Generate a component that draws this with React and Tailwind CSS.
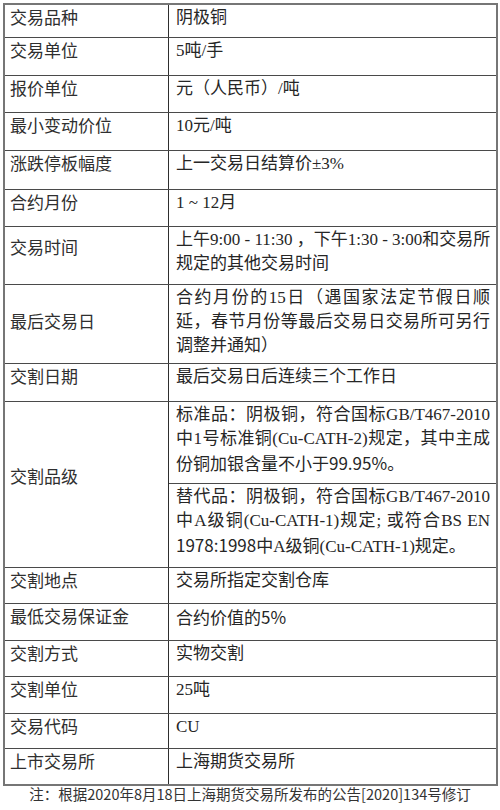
import React from 'react';

const sans = "font-['Noto_Sans_CJK_SC',sans-serif]";
const serif = "font-['Liberation_Serif','Noto_Sans_CJK_SC',serif]";

const S = ({ children }) => <span className={sans}>{children}</span>;

// h = row height incl. its bottom border, lp = label padding-top
const rows = [
  { label: '交易品种', h: 33, lines: ['阴极铜'] },
  { label: '交易单位', h: 38, lines: ['5吨/手'] },
  { label: '报价单位', h: 37, lines: ['元（人民币）/吨'] },
  { label: '最小变动价位', h: 38, lines: ['10元/吨'] },
  { label: '涨跌停板幅度', h: 39, lines: ['上一交易日结算价±3%'] },
  { label: '合约月份', h: 37, lines: ['1 ~ 12月'] },
  {
    label: '交易时间',
    h: 58,
    lp: 8,
    lines: ['上午9:00 - 11:30 ，下午1:30 - 3:00和交易所', '规定的其他交易时间'],
  },
  {
    label: '最后交易日',
    h: 79,
    lp: 24,
    lines: ['合约月份的15日（遇国家法定节假日顺', '延，春节月份等最后交易日交易所可另行', '调整并通知）'],
  },
  { label: '交割日期', h: 38, lines: ['最后交易日后连续三个工作日'] },
  {
    label: '交割品级',
    h: 166,
    lp: 62,
    parts: [
      {
        h: 82,
        lines: [
          '标准品：阴极铜，符合国标GB/T467-2010',
          '中1号标准铜(Cu-CATH-2)规定，其中主成',
          <>份铜加银含量不小于<S>99.95%</S>。</>,
        ],
      },
      {
        lines: [
          '替代品：阴极铜，符合国标GB/T467-2010',
          '中A级铜(Cu-CATH-1)规定; 或符合BS EN',
          <><S>1978:1998</S>中A级铜(Cu-CATH-1)规定。</>,
        ],
      },
    ],
  },
  { label: '交割地点', h: 36, lines: ['交易所指定交割仓库'] },
  { label: '最低交易保证金', h: 37, lines: [<>合约价值的<S>5%</S></>] },
  { label: '交割方式', h: 36, lines: ['实物交割'] },
  { label: '交割单位', h: 37, lines: ['25吨'] },
  { label: '交易代码', h: 35, lines: ['CU'] },
  { label: '上市交易所', h: 35, lines: ['上海期货交易所'] },
];

const Lines = ({ lines }) => (
  <div className="pt-[1px] leading-[24px]">
    {lines.map((line, i) => {
      const last = i === lines.length - 1;
      return (
        <div
          key={i}
          className={
            last
              ? 'whitespace-nowrap text-left'
              : 'whitespace-nowrap text-justify [text-align-last:justify]'
          }
        >
          {line}
        </div>
      );
    })}
  </div>
);

export default function App() {
  return (
    <div className="w-[500px] h-[810px] bg-white overflow-hidden">
      <div className="ml-[3px] mt-[3px] w-[495px] border-2 border-[#767676]">
        {rows.map((row, i) => {
          const last = i === rows.length - 1;
          const heightStyle = { height: row.h };
          return (
            <div
              key={row.label}
              style={heightStyle}
              className={`flex ${last ? '' : 'border-b border-[#4a4a4a]'}`}
            >
              <div
                style={{ paddingTop: row.lp || 0 }}
                className={`w-[164px] shrink-0 border-r border-[#2e2e2e] pl-[5px] text-[17px] leading-[24px] text-[#2f2f2f] ${sans}`}
              >
                {row.label}
              </div>
              {row.parts ? (
                <div className={`flex-1 flex flex-col text-[17px] text-[#262626] ${serif}`}>
                  {row.parts.map((p, j) => (
                    <div
                      key={j}
                      style={p.h ? { height: p.h } : undefined}
                      className={
                        p.h
                          ? 'shrink-0 border-b border-[#4a4a4a] pl-[7px] pr-[6px]'
                          : 'flex-1 pl-[7px] pr-[6px]'
                      }
                    >
                      <Lines lines={p.lines} />
                    </div>
                  ))}
                </div>
              ) : (
                <div className={`flex-1 min-w-0 pl-[7px] pr-[6px] text-[17px] text-[#262626] ${serif}`}>
                  <Lines lines={row.lines} />
                </div>
              )}
            </div>
          );
        })}
      </div>
      <p className={`text-center text-[14.5px] leading-[16px] text-[#333] ${sans}`}>
        注：根据2020年8月18日上海期货交易所发布的公告[2020]134号修订
      </p>
    </div>
  );
}
